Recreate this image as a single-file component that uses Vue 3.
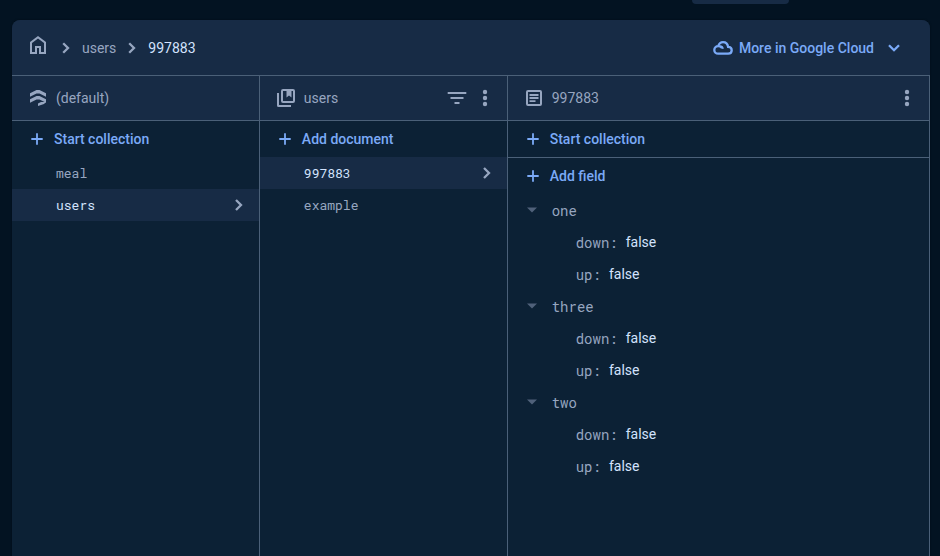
<script setup>
import { ref } from 'vue'

const collections = ['meal', 'users']
const documents = ['997883', 'example']
const activeCollection = ref('users')
const activeDocument = ref('997883')

const fields = ref([
  { name: 'one', open: true, values: { down: false, up: false } },
  { name: 'three', open: true, values: { down: false, up: false } },
  { name: 'two', open: true, values: { down: false, up: false } },
])
</script>

<template>
  <div class="page">
    <div class="tab-strip"><span class="tab"></span></div>

    <main class="panel">
      <header class="topbar">
        <nav class="crumbs" aria-label="Breadcrumb">
          <a class="crumb home" href="#" aria-label="Home">
            <svg width="24" height="24" viewBox="0 0 24 24">
              <path fill="currentColor" d="M12 3 4 9v12h7v-6h2v6h7V9zM18 19h-3v-6H9v6H6v-9l6-4.500 6 4.500z" />
            </svg>
          </a>
          <svg class="sep" width="8" height="12" viewBox="0 0 8 12"><path d="M1.200 1.200 6 6 1.200 10.800" /></svg>
          <a class="crumb" href="#">users</a>
          <svg class="sep" width="8" height="12" viewBox="0 0 8 12"><path d="M1.200 1.200 6 6 1.200 10.800" /></svg>
          <span class="crumb current">997883</span>
        </nav>
        <button class="cloud" type="button">
          <svg width="20" height="20" viewBox="0 0 20 20" fill="none" stroke="currentColor" stroke-width="2.300">
            <path d="M7.200 8.200C8.700 8.500 9.600 9.400 9.900 10.700M5.200 8.100C6 5.700 7.800 4.100 10 4.100c2.700 0 4.700 1.900 5.100 4.800 2.200.1 3.600 1.400 3.600 3.300 0 2-1.500 3.500-3.500 3.500H5.200c-2.200 0-3.900-1.700-3.900-3.800s1.700-3.800 3.900-3.800c1.500 0 2.700.6 3.600 1.600" />
          </svg>
          <span>More in Google Cloud</span>
          <svg class="chevron" width="12" height="8" viewBox="0 0 12 8"><path d="M1 1.200 6 6.200 11 1.200" /></svg>
        </button>
      </header>

      <div class="columns">
        <section class="column">
          <div class="column-head">
            <svg class="head-icon" width="20" height="20" viewBox="0 0 20 20" fill="currentColor">
              <path d="M2 5.200 8.500 2h3L18 5.200v3.600L11.500 5.600h-3L2 8.800zM2 11.200 8.500 8h3l6.500 3.200v3.600l-6.500-3.200h-3L2 14.800zM10 15.600l3-1.600h5l-2 2-6 2z" />
            </svg>
            <h2>(default)</h2>
          </div>
          <button class="add" type="button">
            <svg width="12" height="12" viewBox="0 0 12 12"><path d="M6 .3v11.400M.3 6h11.400" /></svg>
            Start collection
          </button>
          <button
            v-for="name in collections"
            :key="name"
            class="item"
            :class="{ active: name === activeCollection }"
            type="button"
            @click="activeCollection = name"
          >
            {{ name }}
            <svg v-if="name === activeCollection" width="8" height="12" viewBox="0 0 8 12"><path d="M1 1 6 6 1 11" /></svg>
          </button>
        </section>

        <section class="column">
          <div class="column-head">
            <svg class="head-icon" width="20" height="20" viewBox="0 0 20 20" fill="none" stroke="currentColor" stroke-width="2">
              <rect x="6" y="2" width="12" height="12" rx="1" />
              <path d="M2 5v12.500q0 .5.500.5H15" />
              <path fill="currentColor" stroke="none" d="M10.500 2.500H15.500V9.500L13 7.500 10.500 9.500z" />
            </svg>
            <h2>users</h2>
            <button class="tool" type="button" aria-label="Filter">
              <svg width="20" height="20" viewBox="0 0 20 20" stroke="currentColor" stroke-width="2">
                <path d="M.700 5h18.600M3.500 10h13M7.500 15h5" />
              </svg>
            </button>
            <button class="tool" type="button" aria-label="Document options">
              <svg width="20" height="20" viewBox="0 0 20 20" fill="currentColor">
                <circle cx="10" cy="4" r="2.200" /><circle cx="10" cy="10" r="2.200" /><circle cx="10" cy="16" r="2.200" />
              </svg>
            </button>
          </div>
          <button class="add" type="button">
            <svg width="12" height="12" viewBox="0 0 12 12"><path d="M6 .3v11.400M.3 6h11.400" /></svg>
            Add document
          </button>
          <button
            v-for="name in documents"
            :key="name"
            class="item"
            :class="{ active: name === activeDocument }"
            type="button"
            @click="activeDocument = name"
          >
            {{ name }}
            <svg v-if="name === activeDocument" width="8" height="12" viewBox="0 0 8 12"><path d="M1 1 6 6 1 11" /></svg>
          </button>
        </section>

        <section class="column">
          <div class="column-head">
            <svg class="head-icon" width="20" height="20" viewBox="0 0 20 20" fill="none" stroke="currentColor" stroke-width="2">
              <rect x="3" y="3" width="14" height="14" rx="1" />
              <path stroke-width="1.800" d="M5.500 7h9M5.500 10h9M5.500 13.200h6" />
            </svg>
            <h2>997883</h2>
            <button class="tool" type="button" aria-label="Field options">
              <svg width="20" height="20" viewBox="0 0 20 20" fill="currentColor">
                <circle cx="10" cy="4" r="2.200" /><circle cx="10" cy="10" r="2.200" /><circle cx="10" cy="16" r="2.200" />
              </svg>
            </button>
          </div>
          <button class="add ruled" type="button">
            <svg width="12" height="12" viewBox="0 0 12 12"><path d="M6 .3v11.400M.3 6h11.400" /></svg>
            Start collection
          </button>
          <button class="add" type="button">
            <svg width="12" height="12" viewBox="0 0 12 12"><path d="M6 .3v11.400M.3 6h11.400" /></svg>
            Add field
          </button>
          <ul class="tree">
            <li v-for="field in fields" :key="field.name">
              <button class="node" type="button" :aria-expanded="field.open" @click="field.open = !field.open">
                <svg width="10" height="6" viewBox="0 0 10 6"><path d="M0 .5h10L5 5.500z" /></svg>
                <span class="key">{{ field.name }}</span>
              </button>
              <dl v-if="field.open">
                <div v-for="(value, key) in field.values" :key="key" class="leaf">
                  <dt class="key">{{ key }}:</dt>
                  <dd>{{ value }}</dd>
                </div>
              </dl>
            </li>
          </ul>
        </section>
      </div>
    </main>
  </div>
</template>

<style>
body {
  background: #031322;
}
</style>

<style scoped>
.page {
  box-sizing: border-box;
  min-height: 100vh;
  display: flex;
  flex-direction: column;
  padding: 0 10px 0 12px;
  color: #97a6c0;
  font: 14px/20px Roboto, sans-serif;
}
.tab-strip {
  display: flex;
  justify-content: flex-end;
  height: 20px;
  padding-right: 141px;
}
.tab {
  width: 97px;
  height: 4px;
  border-radius: 0 0 8px 8px;
  background: #172b45;
}
button {
  border: 0;
  padding: 0;
  background: none;
  color: inherit;
  font: inherit;
  text-align: left;
  cursor: pointer;
}
svg {
  flex: none;
  display: block;
}
.panel {
  flex: 1;
  display: flex;
  flex-direction: column;
  border-radius: 8px 8px 0 0;
  background: #0c2135;
  box-shadow: 0 0 2px #000a14;
}
.topbar {
  display: flex;
  align-items: center;
  justify-content: space-between;
  height: 55px;
  padding: 0 30px 0 14px;
  border-bottom: 1px solid #4b6078;
  border-radius: 8px 8px 0 0;
  background: #172b45;
}
.crumbs {
  display: flex;
  align-items: center;
}
.crumb {
  color: inherit;
  text-decoration: none;
}
.crumb.current {
  color: #d3e3fd;
}
.home {
  padding-bottom: 5px;
}
.sep {
  margin: 0 12px;
}
.sep path,
.item path,
.chevron path {
  fill: none;
  stroke: currentColor;
  stroke-width: 2.3;
}
.cloud {
  display: flex;
  align-items: center;
  gap: 6px;
  color: #7baaf7;
  font-weight: 500;
}
.chevron {
  margin-left: 8px;
}
.columns {
  flex: 1;
  display: grid;
  grid-template-columns: 27fr 27fr 46fr;
}
.column {
  display: flex;
  flex-direction: column;
  min-width: 0;
  border-right: 1px solid #4b6078;
}
.column-head {
  display: flex;
  align-items: center;
  gap: 8px;
  height: 44px;
  padding: 0 12px 0 16px;
  border-bottom: 1px solid #4b6078;
  background: #172b45;
}
.column-head h2 {
  flex: 1;
  margin: 0;
  font-size: 14px;
  font-weight: 400;
}
.add {
  display: flex;
  align-items: center;
  gap: 11px;
  height: 36px;
  padding: 0 19px;
  color: #7baaf7;
  font-weight: 500;
}
.add path {
  stroke: currentColor;
  stroke-width: 1.8;
}
.ruled {
  height: 37px;
  border-bottom: 1px solid #4b6078;
}
.item {
  display: flex;
  align-items: center;
  justify-content: space-between;
  height: 32px;
  padding: 0 16px 0 44px;
  font: 13px/20px "Roboto Mono", "DejaVu Sans Mono", monospace;
}
.item.active {
  background: #172b45;
  color: #d3e3fd;
}
.item svg {
  color: #97a6c0;
}
.tree {
  margin: 0;
  padding: 0;
  list-style: none;
}
.node {
  display: flex;
  align-items: center;
  gap: 15px;
  width: 100%;
  height: 32px;
  padding-left: 19px;
}
.node path {
  fill: #50617a;
}
dl {
  margin: 0;
}
.leaf {
  display: flex;
  align-items: center;
  gap: 8px;
  height: 32px;
  padding-left: 68px;
}
.key {
  padding-top: 2px;
  font: 14px/20px "Roboto Mono", "DejaVu Sans Mono", monospace;
}
dd {
  margin: 0;
  color: #d3e3fd;
}
</style>
